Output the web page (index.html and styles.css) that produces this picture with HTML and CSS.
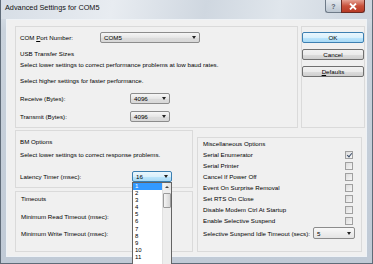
FILE: index.html
```html
<!DOCTYPE html>
<html lang="en">

<head>
  <meta charset="UTF-8" />
  <title>Advanced Settings for COM5</title>
  <link rel="stylesheet" href="styles.css">
</head>

<body>
  <div class="window">
    <div class="titlebar">
      <span class="title">Advanced Settings for COM5</span>
      <div class="caption">
        <span class="cap help">?</span>
        <span class="cap close">
          <svg width="8" height="7" viewBox="0 0 8 7"><path d="M1 0.5 L7 6.5 M7 0.5 L1 6.5" stroke="#fff" stroke-width="1.8" /></svg>
        </span>
      </div>
    </div>

    <div class="client">
      <!-- top: port + transfer sizes, buttons -->
      <div class="top">
        <div class="panel main">
          <div class="row">
            <span class="lbl w80">COM <u>P</u>ort Number:</span>
            <div class="combo w100">COM5<i class="arrow"></i></div>
          </div>
          <div class="line head">USB Transfer Sizes</div>
          <div class="line">Select lower settings to correct performance problems at low baud rates.</div>
          <div class="line spaced">Select higher settings for faster performance.</div>
          <div class="row r1">
            <span class="lbl w110">Receive (Bytes):</span>
            <div class="combo w40">4096<i class="arrow"></i></div>
          </div>
          <div class="row r2">
            <span class="lbl w110">Transmit (Bytes):</span>
            <div class="combo w40">4096<i class="arrow"></i></div>
          </div>
        </div>

        <div class="panel buttons">
          <button class="btn ok">OK</button>
          <button class="btn">Cancel</button>
          <button class="btn"><u>D</u>efaults</button>
        </div>
      </div>

      <!-- bottom: BM options, timeouts, misc -->
      <div class="bottom">
        <div class="leftcol">
          <div class="panel bm">
            <div class="line">BM Options</div>
            <div class="line desc">Select lower settings to correct response problems.</div>
            <div class="row latency">
              <span class="lbl w112">Latency Timer (msec):</span>
              <div class="combo-wrap">
                <div class="combo w40 focus">16<i class="arrow"></i></div>
                <div class="droplist">
                  <ul>
                    <li class="sel">1</li>
                    <li>2</li>
                    <li>3</li>
                    <li>4</li>
                    <li>5</li>
                    <li>6</li>
                    <li>7</li>
                    <li>8</li>
                    <li>9</li>
                    <li>10</li>
                    <li>11</li>
                  </ul>
                  <div class="scroll">
                    <div class="sb-up"><i></i></div>
                    <div class="sb-thumb"></div>
                  </div>
                </div>
              </div>
            </div>
          </div>

          <div class="panel timeouts">
            <div class="line">Timeouts</div>
            <div class="line t1">Minimum Read Timeout (msec):</div>
            <div class="line t2">Minimum Write Timeout (msec):</div>
          </div>
        </div>

        <div class="panel misc">
          <div class="line">Miscellaneous Options</div>
          <div class="opt"><span>Serial Enumerator</span><i class="chk on"></i></div>
          <div class="opt"><span>Serial Printer</span><i class="chk"></i></div>
          <div class="opt"><span>Cancel If Power Off</span><i class="chk"></i></div>
          <div class="opt"><span>Event On Surprise Removal</span><i class="chk"></i></div>
          <div class="opt"><span>Set RTS On Close</span><i class="chk"></i></div>
          <div class="opt"><span>Disable Modem Ctrl At Startup</span><i class="chk"></i></div>
          <div class="opt"><span>Enable Selective Suspend</span><i class="chk"></i></div>
          <div class="row suspend">
            <span class="lbl w110">Selective Suspend Idle Timeout (secs):</span>
            <div class="combo w42">5<i class="arrow"></i></div>
          </div>
        </div>
      </div>
    </div>
  </div>
</body>

</html>
```

FILE: styles.css
```css
/* Base */
body {
  margin: 0;
  width: 373px;
  height: 264px;
  overflow: hidden;
  font-family: 'Liberation Sans', Arial, sans-serif;
  font-size: 6.2px;
  color: #000;
  background: #fff;
}

/* Window frame */
.window {
  box-sizing: border-box;
  height: 264px;
  display: flex;
  flex-direction: column;
  background: linear-gradient(to bottom, #dde3ea, #c9d2dc 30px, #c0cad6);
  border: 1px solid #5f6b78;
  border-top: none;
}

.titlebar {
  height: 19px;
  display: flex;
  align-items: flex-start;
  padding-left: 4px;
  background: linear-gradient(100deg, #d7dee6 0%, #e8ecf1 30%, #cfd7e0 55%, #e0e6ec 75%, #ccd4de 100%);
}

.title {
  font-size: 7.3px;
  line-height: 16px;
  color: #111;
}

.caption {
  margin-left: auto;
  margin-right: 7px;
  display: flex;
}

.cap {
  height: 13px;
  display: flex;
  align-items: center;
  justify-content: center;
  box-sizing: border-box;
  border: 1px solid #6e7a88;
  border-top: none;
}

.help {
  width: 16px;
  border-radius: 0 0 0 3px;
  border-right: none;
  background: linear-gradient(#e3e8ee, #bcc6d1);
  color: #5a6470;
  font-size: 7px;
  font-weight: bold;
}

.close {
  width: 24px;
  border-radius: 0 0 3px 0;
  border-color: #6b2a23;
  background: linear-gradient(#e5a193, #c8503b 50%, #b83a25);
}

/* Client area */
.client {
  flex: 1;
  margin: 0 5px 6px 5px;
  border: 1px solid #eef2f6;
  background: #f0f0f0;
  padding: 6px 1px 4px 8px;
  display: flex;
  flex-direction: column;
  gap: 2px;
}

.panel {
  box-sizing: border-box;
  border: 1px solid #dadada;
}

.top {
  display: flex;
  gap: 3px;
  height: 102px;
}

.main {
  width: 283px;
  padding: 5px 4px 0 4px;
}

.buttons {
  width: 64px;
  padding-top: 5px;
  display: flex;
  flex-direction: column;
  gap: 6px;
}

.btn {
  width: 62px;
  height: 11px;
  padding: 0;
  margin: 0;
  font-family: inherit;
  font-size: 6.2px;
  color: #000;
  border: 1px solid #707070;
  border-radius: 2px;
  background: linear-gradient(#f2f2f2 0%, #ebebeb 50%, #dddddd 51%, #cfcfcf 100%);
}

.btn.ok {
  border-color: #3c7fb1;
  background: linear-gradient(#eaf6fd 0%, #d9f0fc 50%, #bee6fd 51%, #a7d9f5 100%);
}

/* Rows and text lines */
.row {
  display: flex;
  align-items: center;
  height: 11px;
}

.lbl {
  flex: none;
  white-space: nowrap;
}

.w80 { width: 80px; }
.w110 { width: 110px; }
.w112 { width: 112px; }

.line {
  line-height: 11px;
  white-space: nowrap;
}

.head {
  margin-top: 5px;
}

.spaced {
  margin-top: 5px;
}

.r1 {
  margin-top: 7px;
}

.r2 {
  margin-top: 7px;
}

/* Combo boxes */
.combo {
  box-sizing: border-box;
  height: 11px;
  display: flex;
  align-items: center;
  padding-left: 3px;
  border: 1px solid #8c8c8c;
  border-radius: 2px;
  background: linear-gradient(#f6f6f6, #e6e6e6 50%, #dcdcdc 51%, #d8d8d8);
  position: relative;
}

.w40 { width: 40px; }
.w42 { width: 42px; margin-right: -2px; }
.w100 { width: 100px; }

.combo.focus {
  border-color: #3c7fb1;
  background: linear-gradient(#eaf6fd, #d9f0fc 50%, #bee6fd 51%, #a7d9f5);
}

.arrow {
  margin-left: auto;
  margin-right: 3px;
  width: 0;
  height: 0;
  border-left: 2.5px solid transparent;
  border-right: 2.5px solid transparent;
  border-top: 3px solid #222;
}

/* Bottom section */
.bottom {
  flex: 1;
  display: flex;
  gap: 4px;
}

.leftcol {
  width: 178px;
  display: flex;
  flex-direction: column;
  gap: 3px;
}

.bm {
  height: 58px;
  padding: 5px 4px 0 4px;
}

.desc {
  margin-top: 2px;
}

.latency {
  margin-top: 11px;
}

.timeouts {
  flex: 1;
  padding: 1px 5px 0 5px;
}

.t1 {
  margin-top: 7px;
}

.t2 {
  margin-top: 6px;
}

.misc {
  width: 165px;
  margin-top: 7px;
  padding: 0 8px 0 5px;
}

.opt {
  display: flex;
  align-items: center;
  height: 11px;
}

.chk {
  margin-left: auto;
  width: 8px;
  height: 8px;
  box-sizing: border-box;
  border: 1px solid #a0a0a0;
  background: linear-gradient(135deg, #dcdcdc, #f6f6f6);
  position: relative;
}

.chk.on::after {
  content: '';
  position: absolute;
  left: 2px;
  top: 0;
  width: 2px;
  height: 4px;
  border: solid #3d4f6b;
  border-width: 0 1px 1px 0;
  transform: rotate(40deg);
}

.suspend {
  height: 12px;
  margin-top: 1px;
}

.suspend .combo {
  height: 12px;
  background: linear-gradient(#f8f8f8, #e4e4e4);
}

/* Dropdown list (open) */
.combo-wrap {
  position: relative;
}

.droplist {
  position: absolute;
  top: 11px;
  left: 0;
  width: 40px;
  height: 84px;
  box-sizing: border-box;
  border: 1px solid #646464;
  border-bottom: none;
  background: #fff;
  display: flex;
  z-index: 10;
}

.droplist ul {
  list-style: none;
  margin: 0;
  padding: 0;
  flex: 1;
}

.droplist li {
  line-height: 7.1px;
  height: 7.1px;
  padding-left: 2px;
  font-size: 6px;
}

.droplist li.sel {
  background: #3399ff;
  color: #fff;
}

.scroll {
  width: 8px;
  background: #ededed;
  border-left: 1px solid #e0e0e0;
}

.sb-up {
  height: 7px;
  display: flex;
  align-items: center;
  justify-content: center;
  background: linear-gradient(90deg, #f4f4f4, #e2e2e2);
}

.sb-up i {
  width: 0;
  height: 0;
  border-left: 2px solid transparent;
  border-right: 2px solid transparent;
  border-bottom: 2px solid #444;
}

.sb-thumb {
  margin-top: 3px;
  height: 15px;
  box-sizing: border-box;
  border: 1px solid #9a9a9a;
  border-radius: 1px;
  background: linear-gradient(90deg, #f4f4f4, #d6d6d6);
}
```
